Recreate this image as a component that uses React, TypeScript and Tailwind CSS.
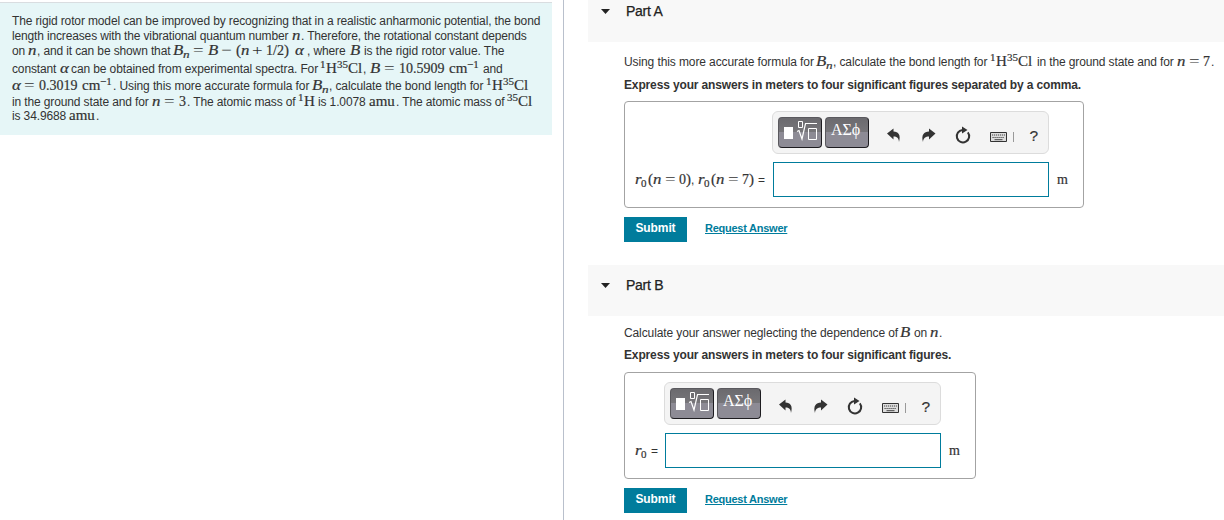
import type { ReactNode } from "react";

interface BoxProps {
  w?: string;
  className?: string;
  children: ReactNode;
}

// plain run of text with a set advance
function T({ w = "", className = "", children }: BoxProps) {
  return <span className={`inline-block whitespace-pre tracking-[-0.13px] ${w} ${className}`}>{children}</span>;
}

// upright math
function M({ w = "", className = "", children }: BoxProps) {
  return (
    <span className={`inline-block whitespace-pre font-['Liberation_Serif',serif] text-[15px] leading-[12px] [-webkit-text-stroke:0.2px_currentColor] ${w} ${className}`}>
      {children}
    </span>
  );
}

// numerals
function N({ w = "", children }: BoxProps) {
  return <M w={w} className="text-[14px]!">{children}</M>;
}

// italic math variable
function V({ w = "", className = "", children }: BoxProps) {
  return (
    <M w={w} className={`italic ${className}`}>
      <span className="inline-block origin-left scale-x-[1.12]">{children}</span>
    </M>
  );
}

function Sup({ w, children }: BoxProps) {
  return <M w={w} className="relative -top-[5px] text-[11px]!">{children}</M>;
}

function Sub({ w, className = "", children }: BoxProps) {
  return <M w={w} className={`relative top-[3px] text-[11px]! ${className}`}>{children}</M>;
}

// wide operator with thin strokes
function Op({ w, children = "=" }: { w: string; children?: string }) {
  return (
    <M w={w}>
      <span className="inline-block origin-left scale-x-[1.25] [-webkit-text-stroke:0]">{children}</span>
    </M>
  );
}

function Bn({ w }: { w: string }) {
  return (
    <span className={`inline-block whitespace-pre ${w}`}>
      <V w="w-[10px]">B</V>
      <Sub className="italic">
        <span className="inline-block origin-left scale-x-[1.2]">n</span>
      </Sub>
    </span>
  );
}

function HCl({ w }: { w: string }) {
  return (
    <span className={`inline-block whitespace-pre ${w}`}>
      <Sup w="w-[6px]">1</Sup>
      <M w="w-[11px]">H</M>
      <Sup w="w-[11px]">35</Sup>
      <M>Cl</M>
    </span>
  );
}

function Line({ h, children }: { h: string; children: ReactNode }) {
  return <div className={`flex items-baseline whitespace-nowrap ${h}`}>{children}</div>;
}

function Intro() {
  return (
    <div className="mt-[2px] h-[133px] w-[552px] border-t border-[#d9dde0] bg-[#e6f6f7] pt-[11px] pl-3 text-[12px] leading-[15px] text-[#333]">
      <Line h="h-[15px]">
        <T>The rigid rotor model can be improved by recognizing that in a realistic anharmonic potential, the bond</T>
      </Line>
      <Line h="h-[15px]">
        <T w="w-[280px]" className="tracking-[-0.15px]!">length increases with the vibrational quantum number </T>
        <V w="w-[9px]">n</V>
        <T className="tracking-[-0.16px]!">. Therefore, the rotational constant depends</T>
      </Line>
      <Line h="h-[15px]">
        <T w="w-[16px]">on </T>
        <V w="w-[9px]">n</V>
        <T w="w-[136px]">, and it can be shown that </T>
        <Bn w="w-[20px]" />
        <Op w="w-[15px]" />
        <V w="w-[13px]">B</V>
        <Op w="w-[15px]">−</Op>
        <M w="w-[5px]">(</M>
        <V w="w-[11px]">n</V>
        <Op w="w-[14px]">+</Op>
        <N w="w-[18px]">1/2</N>
        <M w="w-[11px]">)</M>
        <V w="w-[12px]">α</V>
        <T w="w-[43px]">, where </T>
        <V w="w-[14px]">B</V>
        <T className="tracking-[-0.05px]!">is the rigid rotor value. The</T>
      </Line>
      <Line h="h-[18px] pt-[3px]">
        <T w="w-[48px]">constant </T>
        <V w="w-[11px]">α</V>
        <T w="w-[249px]" className="tracking-[-0.11px]!">can be obtained from experimental spectra. For </T>
        <HCl w="w-[43px]" />
        <T w="w-[7px]">,</T>
        <V w="w-[14px]">B</V>
        <Op w="w-[15px]" />
        <N w="w-[50px]">10.5909</N>
        <M w="w-[18px]">cm</M>
        <Sup w="w-[16px]">−1</Sup>
        <T>and</T>
      </Line>
      <Line h="h-[18px] pt-[2px]">
        <V w="w-[12px]">α</V>
        <Op w="w-[15px]" />
        <N w="w-[43px]">0.3019</N>
        <M w="w-[18px]">cm</M>
        <Sup w="w-[13px]">−1</Sup>
        <T w="w-[199px]" className="tracking-[-0.1px]!">. Using this more accurate formula for </T>
        <Bn w="w-[17px]" />
        <T w="w-[157px]" className="tracking-[-0.1px]!">, calculate the bond length for </T>
        <HCl w="w-[43px]" />
      </Line>
      <Line h="h-[14px]">
        <T w="w-[140px]">in the ground state and for </T>
        <V w="w-[12px]">n</V>
        <Op w="w-[15px]" />
        <N w="w-[8px]">3</N>
        <T w="w-[111px]">. The atomic mass of </T>
        <Sup w="w-[6px]">1</Sup>
        <M w="w-[14px]">H</M>
        <T w="w-[51px]">is 1.0078 </T>
        <M w="w-[27px]">amu</M>
        <T w="w-[111px]">. The atomic mass of </T>
        <Sup w="w-[11px]">35</Sup>
        <M>Cl</M>
      </Line>
      <Line h="h-[15px]">
        <T w="w-[57px]">is 34.9688 </T>
        <M w="w-[27px]">amu</M>
        <T>.</T>
      </Line>
    </div>
  );
}

function PartHeader({ title, className }: { title: string; className: string }) {
  return (
    <div className={`flex bg-[#f8f8f8] pl-[13px] ${className}`}>
      <svg width="9" height="5" viewBox="0 0 9 5" className="mt-[9px] shrink-0">
        <path d="M0 0h9L4.5 5z" fill="#222" />
      </svg>
      <h2 className="ml-4 text-[14px] leading-[22px] tracking-[-0.25px] text-[#222] [-webkit-text-stroke:0.25px_currentColor]">{title}</h2>
    </div>
  );
}

const toolButton =
  "flex h-[31px] w-[44px] rounded-[4px] border border-[#5a595e] border-r-[#1d1c20] border-b-[#1d1c20] bg-linear-to-b from-[#6b6a6e] from-0% via-[#77767a] via-50% to-[#8d8b95] to-50%";

function Toolbar() {
  return (
    <div className="flex h-[43px] w-[277px] rounded-[6px] border border-[#dcdcdc] bg-[#f4f4f4] pt-[5px] pl-[5px] text-[#333]">
      <button className={toolButton}>
        <svg width="42" height="29" viewBox="0 0 42 29" fill="none" stroke="#fff">
          <path d="M5 9h9v12H5z" fill="#fff" stroke="none" />
          <path d="M19.5 3.5h4v6h-4zM29.500 10.500h8v11h-8z" />
          <path d="M18 13.500l2-1 3 8.500L26.500 5.500H38" strokeWidth="1.2" />
        </svg>
      </button>
      <button className={`${toolButton} ml-[3px] pt-[1px] pl-[5px] text-left font-['Liberation_Serif',serif] text-[16px] leading-[21px] text-white`}>
        ΑΣϕ
      </button>
      <svg width="176" height="31" viewBox="0 0 176 31" className="shrink-0">
        <path d="M18 16.500l6.500-5v3c5 0 7.500 3.500 5.500 10.500-.3-4-2-5.500-5.500-5.500v3z" fill="#333" />
        <path d="M66.500 16.500l-6.500-5v3c-5 0-8 3.500-6 10.500.3-4 2.500-5.500 6-5.500v3z" fill="#333" />
        <path d="M93.500 13a6.200 6.200 0 1 0 5.300 2.300" fill="none" stroke="#333" strokeWidth="2" />
        <path d="M93 9.500l5.500 3.500-5.500 3.500z" fill="#333" />
        <path d="M121.500 15.500h16v9h-16z" fill="#ddd" stroke="#333" />
        <path d="M123 18h13M123.500 20.500h12" stroke="#444" strokeDasharray="1.200 0.800" />
        <path d="M125.500 22.700h8" stroke="#444" />
        <path d="M144.500 15v10" stroke="#999" />
        <text x="160.500" y="23.500" fontSize="15.500" fontFamily="Liberation Sans" fill="#333" stroke="#333" strokeWidth="0.2">?</text>
      </svg>
    </div>
  );
}

function AnswerBox({ label, className, labelWidth }: { label: ReactNode; className: string; labelWidth: string }) {
  return (
    <div className={`ml-9 h-[107px] rounded-[4px] border border-[#a3a3a3] pt-[9px] text-[12px] text-[#333] ${className}`}>
      <div className="flex">
        <div className={`shrink-0 ${labelWidth}`} />
        <Toolbar />
      </div>
      <div className="mt-2 flex items-center">
        <div className={`flex shrink-0 items-baseline pl-[10px] ${labelWidth}`}>{label}</div>
        <input className="ml-px h-[35px] w-[276px] border border-[#007c9c] bg-white outline-none" />
        <M className="ml-2 text-[14px]!">m</M>
      </div>
    </div>
  );
}

function Actions() {
  return (
    <div className="mt-[9px] ml-9 flex h-[25px] text-[12px]">
      <button className="w-[63px] bg-[#007c9c] pb-[4px] font-bold tracking-[-0.1px] text-white">Submit</button>
      <a href="#" className="ml-[18px] pt-[2px] text-[11px] leading-[18px] font-bold tracking-[-0.25px] text-[#007c9c] underline">
        Request Answer
      </a>
    </div>
  );
}

export default function App() {
  return (
    <div className="flex h-[520px] w-[1224px] overflow-hidden bg-white font-['Liberation_Sans',Arial,sans-serif]">
      <div className="w-[564px] shrink-0 border-r border-[#b9c0cc]">
        <Intro />
      </div>
      <div className="ml-6 w-[636px] shrink-0">
        <PartHeader title="Part A" className="h-[42px]" />
        <div className="mt-[13px] pl-9 text-[12px] leading-[15px] text-[#333]">
          <Line h="h-[23px]">
            <T w="w-[192px]" className="tracking-[-0.1px]!">Using this more accurate formula for </T>
            <Bn w="w-[17px]" />
            <T w="w-[157px]" className="tracking-[-0.1px]!">, calculate the bond length for </T>
            <HCl w="w-[47px]" />
            <T w="w-[140px]">in the ground state and for </T>
            <V w="w-[12px]">n</V>
            <Op w="w-[14px]" />
            <N w="w-[8px]">7</N>
            <T>.</T>
          </Line>
          <p className="h-[23px] font-bold tracking-[-0.14px]">Express your answers in meters to four significant figures separated by a comma.</p>
        </div>
        <AnswerBox
          className="w-[460px]"
          labelWidth="w-[147px]"
          label={
            <>
              <V w="w-[6px]">r</V>
              <Sub w="w-[7px]">0</Sub>
              <M w="w-[5px]">(</M>
              <V w="w-[12px]">n</V>
              <Op w="w-[14px]" />
              <N w="w-[7px]">0</N>
              <M w="w-[5px]">)</M>
              <T w="w-[7px]">,</T>
              <V w="w-[6px]">r</V>
              <Sub w="w-[7px]">0</Sub>
              <M w="w-[5px]">(</M>
              <V w="w-[12px]">n</V>
              <Op w="w-[14px]" />
              <N w="w-[7px]">7</N>
              <M w="w-[9px]">)</M>
              <T>=</T>
            </>
          }
        />
        <Actions />
        <PartHeader title="Part B" className="mt-[23px] h-[51px] pt-[9px]" />
        <div className="mt-[10px] pl-9 text-[12px] leading-[15px] text-[#333]">
          <Line h="h-[22px]">
            <T w="w-[276px]" className="tracking-[-0.11px]!">Calculate your answer neglecting the dependence of </T>
            <V w="w-[14px]">B</V>
            <T w="w-[16px]">on </T>
            <V w="w-[9px]">n</V>
            <T>.</T>
          </Line>
          <p className="h-[24px] font-bold tracking-[-0.14px]">Express your answers in meters to four significant figures.</p>
        </div>
        <AnswerBox
          className="w-[352px]"
          labelWidth="w-[39px]"
          label={
            <>
              <V w="w-[6px]">r</V>
              <Sub w="w-[10px]">0</Sub>
              <T>=</T>
            </>
          }
        />
        <Actions />
      </div>
    </div>
  );
}
